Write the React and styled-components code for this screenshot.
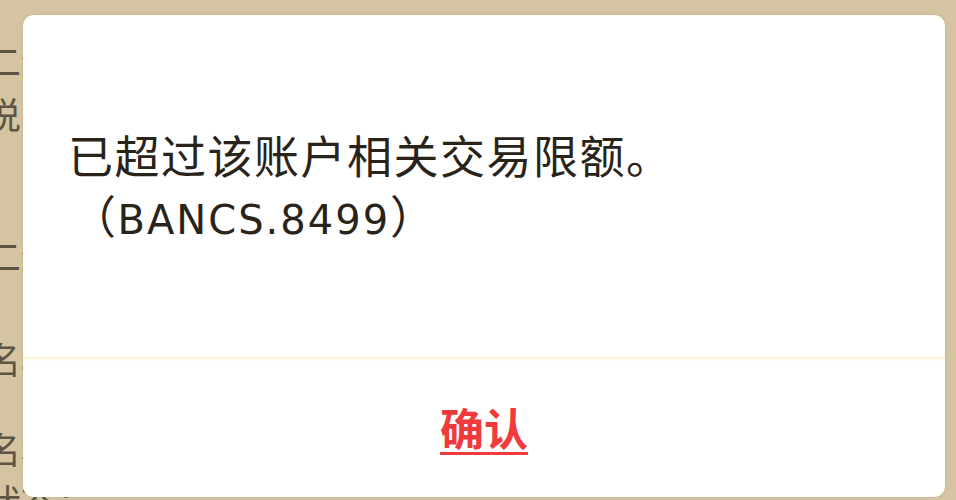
import React from "react";
import styled, { createGlobalStyle } from "styled-components";

const Global = createGlobalStyle`
  html, body { margin: 0; padding: 0; }
  body {
    width: 956px;
    height: 500px;
    overflow: hidden;
    background: #d5c4a1;
    font-family: "Noto Sans CJK SC", "Noto Sans", sans-serif;
  }
`;

const Page = styled.div`
  position: relative;
  width: 956px;
  height: 500px;
  overflow: hidden;
  background: #d5c4a1;
`;

const BackList = styled.div`
  display: flex;
  flex-direction: column;
  margin-left: -15px;
`;

const BackRow = styled.div`
  margin-top: ${(p) => p.$gap}px;
  height: 40px;
  font-size: 36px;
  line-height: 40px;
  color: #5e5444;
  white-space: nowrap;
`;

const Dialog = styled.div`
  position: absolute;
  left: 23px;
  top: 15px;
  width: 922px;
  height: 482px;
  background: #ffffff;
  border-radius: 11px;
  display: flex;
  flex-direction: column;
  overflow: hidden;
  box-shadow: 0 0 2px rgba(120, 100, 60, 0.25);
`;

const Body = styled.div`
  height: 342px;
  display: flex;
  align-items: center;
  padding: 0 45px;
`;

const Message = styled.p`
  margin: 0;
  margin-top: 3px;
  width: 640px;
  font-size: 45px;
  letter-spacing: 1.5px;
  line-height: 60px;
  color: #2a2319;
  font-family: "Noto Sans CJK SC", sans-serif;
`;

const CodeGroup = styled.span`
  display: inline-block;
  white-space: nowrap;
  padding-left: 3px;
`;

const Code = styled.span`
  font-family: "DejaVu Sans", sans-serif;
  font-size: 40px;
  letter-spacing: 2px;
`;

const Divider = styled.div`
  height: 2px;
  background: #fcf5dc;
  box-shadow: 0 0 3px rgba(250, 236, 180, 0.7);
`;

const Footer = styled.div`
  flex: 1;
  display: flex;
  align-items: center;
  justify-content: center;
`;

const ConfirmButton = styled.button`
  border: none;
  background: none;
  padding: 0;
  margin-top: -2px;
  font-family: "Noto Sans CJK SC", sans-serif;
  font-size: 44px;
  font-weight: 700;
  line-height: 60px;
  color: #ef3b3b;
  text-decoration: underline;
  text-decoration-thickness: 3px;
  text-underline-offset: 6px;
  cursor: pointer;
`;

const backRows = [
  { gap: 40, text: "二维码：" },
  { gap: 13, text: "说明：" },
  { gap: 102, text: "二维码：" },
  { gap: 63, text: "名称：" },
  { gap: 50, text: "名称：" },
  { gap: 12, text: "状态：" },
];

export default function App() {
  return (
    <>
      <Global />
      <Page>
        <BackList>
          {backRows.map((r, i) => (
            <BackRow key={i} $gap={r.gap}>
              {r.text}
            </BackRow>
          ))}
        </BackList>
        <Dialog>
          <Body>
            <Message>
              已超过该账户相关交易限额。
              <CodeGroup>
                （<Code>BANCS.8499</Code>）
              </CodeGroup>
            </Message>
          </Body>
          <Divider />
          <Footer>
            <ConfirmButton>确认</ConfirmButton>
          </Footer>
        </Dialog>
      </Page>
    </>
  );
}
